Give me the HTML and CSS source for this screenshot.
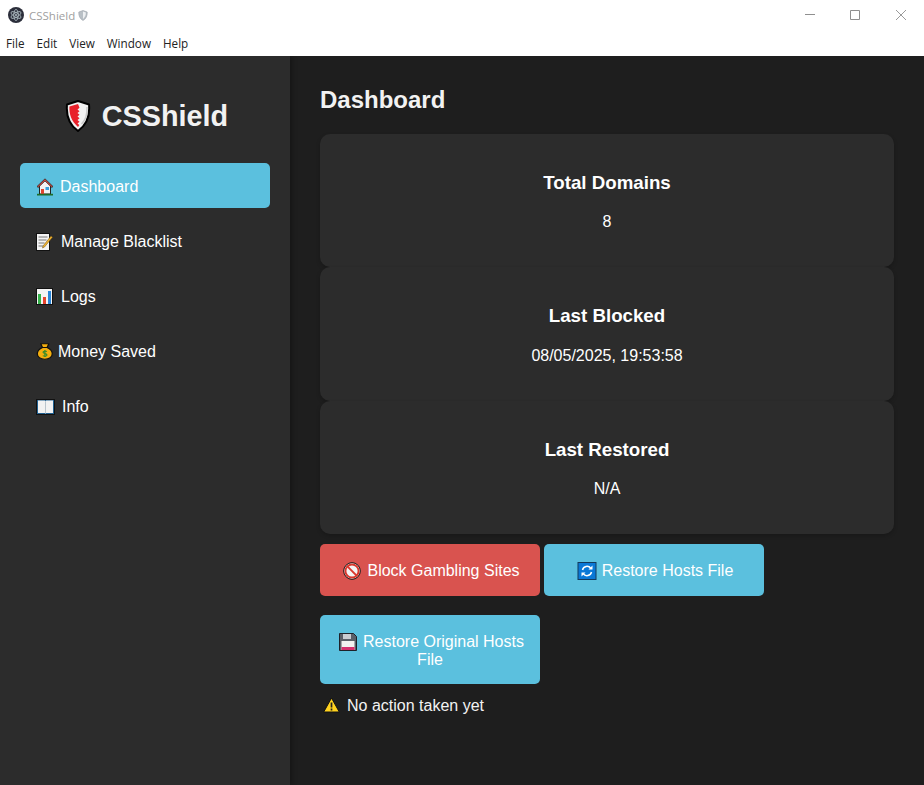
FILE: index.html
```html
<!DOCTYPE html>
<html lang="en">
<head>
<meta charset="utf-8">
<title>CSShield</title>
<link rel="stylesheet" href="styles.css">
</head>
<body>
<div class="window">
  <header class="titlebar">
    <div class="app-title">
      <svg class="app-icon" viewBox="0 0 16 16" aria-hidden="true">
        <circle cx="8" cy="8" r="8" fill="#2b2e3a"/>
        <g fill="none" stroke="#b4c2c8" stroke-width=".8">
          <ellipse cx="8" cy="8" rx="5.6" ry="2.2" transform="rotate(30 8 8)"/>
          <ellipse cx="8" cy="8" rx="5.6" ry="2.2" transform="rotate(90 8 8)"/>
          <ellipse cx="8" cy="8" rx="5.6" ry="2.2" transform="rotate(150 8 8)"/>
        </g>
        <circle cx="8" cy="8" r="1" fill="#b4c2c8"/>
      </svg>
      <span class="app-name">CSShield</span>
      <svg class="title-shield" viewBox="0 0 10 11" aria-hidden="true">
        <path d="M5 .5 9.200 2c.2 3.600-.9 6.600-4.200 8.500C1.700 8.600.6 5.600.8 2z" fill="#b9c0c6" stroke="#98a0a8" stroke-width=".6"/>
        <path d="M5 1.500 7.800 2.600C7.900 5.200 7 7.500 5 8.900z" fill="#eef0f2"/>
      </svg>
    </div>
    <div class="controls">
      <span class="ctl ctl-min"><svg width="10" height="10" viewBox="0 0 10 10"><path d="M0 4.500h10" stroke="#8f8f8f"/></svg></span>
      <span class="ctl"><svg width="10" height="10" viewBox="0 0 10 10"><path d="M.5.500h9v9h-9z" fill="none" stroke="#8f8f8f"/></svg></span>
      <span class="ctl"><svg width="10" height="10" viewBox="0 0 10 10"><path d="M0 0l10 10M10 0 0 10" stroke="#8f8f8f" stroke-width=".9"/></svg></span>
    </div>
  </header>
  <nav class="menubar">
    <span class="menu-item">File</span>
    <span class="menu-item">Edit</span>
    <span class="menu-item">View</span>
    <span class="menu-item">Window</span>
    <span class="menu-item">Help</span>
  </nav>
  <div class="app">
    <aside class="sidebar">
      <div class="brand">
        <svg class="brand-icon" viewBox="0 0 30 32" aria-hidden="true">
          <path d="M16 1 27 4.500C28 15 25 24.500 16 31 7 24.500 4 15 5 4.500z" fill="#f1f1f1" stroke="#000" stroke-width="2" stroke-linejoin="round"/>
          <path d="M16 4 7.400 6.600C7.200 14 9 21 16 27l1.300-2-1.800-1.500 2-1.800-2-1.700 2-1.800-2-1.700 2-1.800-2-1.700 2-1.800-2-1.700 2-1.800z" fill="#e8202a"/>
          <path d="M25 7c.3 7-1.200 13-5.500 17" fill="none" stroke="#c9c9c9" stroke-width="1.500"/>
        </svg>
        <span class="brand-name">CSShield</span>
      </div>
      <a class="nav-item active">
        <svg class="emoji icon-house" viewBox="0 0 20 18" aria-hidden="true">
          <path d="M4.500 16V7.500L10 2l5.500 5.500V16z" fill="#f3f3f3" stroke="#222"/>
          <path d="M10 .8 2 8.500l1.200 1L10 3l6.800 6.500 1.200-1z" fill="#d0483c" stroke="#222" stroke-width=".7"/>
          <rect x="6" y="11" width="3" height="5" fill="#e0452f"/>
          <rect x="10.500" y="9" width="3.500" height="3" fill="#3aa0dc"/>
          <rect x="2" y="15.800" width="16" height="1.700" fill="#1f6d2a"/>
        </svg><span>Dashboard</span>
      </a>
      <a class="nav-item">
        <svg class="emoji icon-note" viewBox="0 0 22 18" aria-hidden="true">
          <rect x="1.500" y=".5" width="13" height="17" fill="#f4f4f4" stroke="#111"/>
          <path d="M3.500 4h9M3.500 7h8M3.500 10h6M3.500 13h5" stroke="#777"/>
          <path d="M8 13 16 3l1.500 1.200L9.500 14 7.500 15z" fill="#f2b632" stroke="#6b4a10" stroke-width=".5"/>
        </svg><span>Manage Blacklist</span>
      </a>
      <a class="nav-item">
        <svg class="emoji icon-chart" viewBox="0 0 22 17" aria-hidden="true">
          <rect x="1.500" y=".5" width="16" height="16" fill="#f4f4f4" stroke="#111"/>
          <rect x="3" y="6" width="3" height="10" fill="#35b34a"/>
          <rect x="8" y="9" width="3" height="7" fill="#e5432d"/>
          <rect x="13" y="3" width="3" height="13" fill="#2a86d8"/>
        </svg><span>Logs</span>
      </a>
      <a class="nav-item">
        <svg class="emoji icon-bag" viewBox="0 0 16.500 17" preserveAspectRatio="none" aria-hidden="true">
          <path d="M5 .8h7L10.500 4.500c3 1.500 4.500 3.800 4.500 6.300 0 3-2.500 5.500-6.500 5.500S2 13.800 2 10.800C2 8.300 3.500 6 6.500 4.500z" fill="#f4ae0e" stroke="#111" stroke-width="1.100" stroke-linejoin="round"/>
          <path d="M6 4.500h5" stroke="#111"/>
          <path d="M10.300 8.600C9 7.600 7 8.100 7 9.300c0 1.600 3.400 1 3.400 2.700 0 1.300-2.200 1.600-3.600.6M8.600 7v7" fill="none" stroke="#2d8a2d"/>
        </svg><span>Money Saved</span>
      </a>
      <a class="nav-item">
        <svg class="emoji icon-book" viewBox="0 0 23 16" aria-hidden="true">
          <rect x="1.500" y=".5" width="18" height="15" fill="#1f5f8f" stroke="#111"/>
          <path d="M3 1.500h6.800l.7.800.7-.8H18v12.500h-6.800l-.7.600-.7-.6H3z" fill="#f2f2f2"/>
          <path d="M10.500 2.300v12" stroke="#b9c4cc"/>
        </svg><span>Info</span>
      </a>
    </aside>
    <main class="main">
      <h1 class="page-title">Dashboard</h1>
      <section class="card">
        <h3 class="card-title">Total Domains</h3>
        <p class="card-value">8</p>
      </section>
      <section class="card">
        <h3 class="card-title">Last Blocked</h3>
        <p class="card-value">08/05/2025, 19:53:58</p>
      </section>
      <section class="card">
        <h3 class="card-title">Last Restored</h3>
        <p class="card-value">N/A</p>
      </section>
      <div class="actions">
        <button class="btn btn-danger">
          <svg class="btn-icon" viewBox="-2 0 23 18" aria-hidden="true">
            <circle cx="10" cy="9" r="8.300" fill="#f5f5f5" stroke="#111"/>
            <circle cx="10" cy="9" r="6.600" fill="none" stroke="#d9382e" stroke-width="2"/>
            <path d="M5.400 4.400l9.200 9.200" stroke="#d9382e" stroke-width="2"/>
          </svg>Block Gambling Sites
        </button>
        <button class="btn btn-info">
          <svg class="btn-icon" viewBox="-2 0 23 18" aria-hidden="true">
            <rect x="1" y=".5" width="18" height="17" fill="#0a78d6" stroke="#123a5c"/>
            <path d="M5.500 8a4.600 4.600 0 0 1 8.300-1.600M14.500 10a4.600 4.600 0 0 1-8.300 1.600" fill="none" stroke="#fff" stroke-width="1.500"/>
            <path d="M15.500 3.500v4h-4zM4.500 14.500v-4h4z" fill="#fff"/>
          </svg>Restore Hosts File
        </button>
        <button class="btn btn-info">
          <svg class="btn-icon" viewBox="-2 0 23 18" aria-hidden="true">
            <path d="M1.500.5h14l3 3v14h-17z" fill="#5a5f68" stroke="#1d2129"/>
            <rect x="5" y="1" width="8" height="5" fill="#c9ccd2"/>
            <rect x="3.500" y="8" width="13" height="9" fill="#f2f2f2"/>
            <rect x="3.500" y="14" width="13" height="3" fill="#d5306f"/>
          </svg>Restore Original Hosts File
        </button>
      </div>
      <p class="status">
        <svg class="status-icon" viewBox="0 0 17 16" aria-hidden="true">
          <path d="M8.500 1 16.300 15H.7z" fill="#ffd21f" stroke="#111" stroke-linejoin="round"/>
          <path d="M8.500 5.500v5M8.500 11.500v2" stroke="#222" stroke-width="1.700"/>
        </svg><span>No action taken yet</span>
      </p>
    </main>
  </div>
</div>
</body>
</html>
```

FILE: styles.css
```css
* { box-sizing: border-box; }
html, body { margin: 0; padding: 0; height: 100%; overflow: hidden; }
body { font-family: "Liberation Sans", Arial, sans-serif; color: #fff; background: #1e1e1e; }
.window { display: flex; flex-direction: column; height: 785px; }

.titlebar { height: 30px; background: #fff; display: flex; justify-content: space-between; flex: none; }
.app-title { display: flex; align-items: center; padding-left: 8px; }
.app-icon { width: 16px; height: 16px; }
.app-name { margin-left: 5px; font: 11.500px "Open Sans", sans-serif; color: #a0a0a0; }
.title-shield { width: 10px; height: 11px; margin-left: 3px; }
.controls { display: flex; }
.ctl { width: 46px; display: flex; align-items: center; justify-content: center; }
.ctl-min { width: 45px; }

.menubar { height: 26px; background: #fff; display: flex; flex: none; }
.menu-item { padding: 0 6px; font: 11.700px/26px "Open Sans", sans-serif; color: #222; }

.app { flex: 1; display: flex; min-height: 0; overflow: hidden; }
.sidebar { width: 290px; flex: none; background: #2c2c2c; padding: 40px 20px 0; box-shadow: 2px 0 5px rgba(0,0,0,.3); position: relative; }
.brand { display: flex; align-items: center; justify-content: center; height: 40px; margin-bottom: 27px; gap: 10px; }
.brand-icon { width: 30px; height: 32px; }
.brand-name { font-size: 28.800px; font-weight: 700; color: #f2f2f2; }
.nav-item { display: flex; align-items: center; height: 45px; margin-bottom: 10px; padding: 2px 0 0 15px; font-size: 16px; border-radius: 5px; color: #fff; }
.nav-item.active { background: #5bc0de; }
.emoji { display: block; flex: none; margin-right: 5px; }
.icon-house { width: 20px; height: 18px; }
.icon-note { width: 22px; height: 18px; margin-right: 4px; }
.icon-chart { width: 22px; height: 17px; margin-right: 4px; }
.icon-bag { width: 19px; height: 17px; margin-right: 4px; }
.icon-book { width: 23px; height: 16px; margin-right: 4px; }
.btn-icon { width: 23px; height: 18px; vertical-align: -4px; margin-right: 4px; }

.main { flex: 1; min-width: 0; padding: 30px; }
.page-title { margin: 0 0 20px; font-size: 24px; line-height: 28px; font-weight: 700; color: #f2f2f2; }
.card { height: 133.330px; background: #2c2c2c; border-radius: 10px; box-shadow: 0 2px 4px rgba(0,0,0,.2); text-align: center; padding-top: 38px; }
.card-title { margin: 0; font-size: 18.720px; line-height: 21px; font-weight: 700; }
.card-value { margin: 19.200px 0 0; font-size: 16px; line-height: 19px; }
.actions { display: flex; flex-wrap: wrap; gap: 19px 4px; margin-top: 10px; align-items: flex-start; }
.btn { width: 220px; min-height: 52px; padding: 17.900px 10px 15.100px; border: 0; border-radius: 5px; font: 16px/18px "Liberation Sans", Arial, sans-serif; color: #fff; text-align: center; }
.btn-danger { background: #d9534f; }
.btn-info { background: #5bc0de; }
.status { display: flex; align-items: center; margin: 12px 0 0; padding-left: 3px; font-size: 16px; line-height: 19px; color: #f2f2f2; }
.status-icon { width: 17px; height: 16px; margin-right: 7px; }
```
